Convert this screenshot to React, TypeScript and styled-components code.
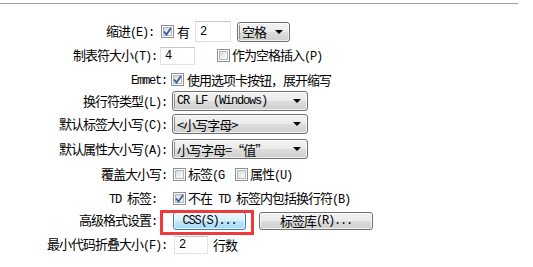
import React from "react";
import styled, { createGlobalStyle, css } from "styled-components";

const Global = createGlobalStyle`
  html, body { margin: 0; padding: 0; background: #fff; }
  body {
    font-family: "Noto Sans CJK SC", "Liberation Sans", sans-serif;
    font-size: 13px;
    letter-spacing: -1px;
    color: #000;
  }
`;

const Page = styled.div`
  width: 533px;
  height: 267px;
  overflow: hidden;
  background: #fff;
`;

const TopRule = styled.div`
  margin-top: 3px;
  width: 518px;
  height: 1px;
  background: #a0a0a0;
`;

const Form = styled.div`
  display: flex;
  flex-direction: column;
  padding-top: 16px;
`;

const Row = styled.div<{ $h: number }>`
  display: flex;
  align-items: center;
  height: ${(p) => p.$h}px;
`;

const Label = styled.div<{ $w: number }>`
  flex: none;
  width: ${(p) => p.$w}px;
  text-align: right;
  white-space: nowrap;
  line-height: 1;
`;

const Controls = styled.div<{ $ml: number }>`
  display: flex;
  align-items: center;
  margin-left: ${(p) => p.$ml}px;
`;

const M = styled.span`
  font-family: "Liberation Mono", "DejaVu Sans Mono", monospace;
  font-size: 12px;
  letter-spacing: -1.2px;
`;

const Text = styled.span<{ $ml?: number }>`
  margin-left: ${(p) => p.$ml ?? 0}px;
  white-space: nowrap;
  line-height: 1;
`;

const BoxWrap = styled.span<{ $ml?: number }>`
  flex: none;
  display: inline-flex;
  width: 13px;
  height: 13px;
  margin-left: ${(p) => p.$ml ?? 0}px;
  box-sizing: border-box;
  border: 1px solid #8e8f8f;
  background: #fff;
  padding: 1px;
`;

const BoxInner = styled.span`
  flex: 1;
  display: flex;
  align-items: center;
  justify-content: center;
  border: 1px solid #b3b7bd;
  background: linear-gradient(135deg, #d6d9de 0%, #eef0f2 60%, #f8f8f8 100%);
`;

const Check: React.FC<{ checked?: boolean; ml?: number }> = ({ checked, ml }) => (
  <BoxWrap $ml={ml}>
    <BoxInner>
      {checked && (
        <svg width="9" height="9" viewBox="0 0 9 9" style={{ margin: -1 }}>
          <path d="M1 4.5 L3.5 7.5 L8 1" fill="none" stroke="#3d5a98" strokeWidth="1.8" />
        </svg>
      )}
    </BoxInner>
  </BoxWrap>
);

const Input = styled.div<{ $w: number; $h: number; $ml?: number }>`
  flex: none;
  box-sizing: border-box;
  width: ${(p) => p.$w}px;
  height: ${(p) => p.$h}px;
  margin-left: ${(p) => p.$ml ?? 0}px;
  border: 1px solid #e2e3ea;
  border-top-color: #c5c7cc;
  background: #fff;
  display: flex;
  align-items: center;
  padding-left: 4px;
  font-family: "Liberation Mono", "DejaVu Sans Mono", monospace;
  font-size: 12px;
  letter-spacing: 0;
`;

const win7Grey = css`
  border: 1px solid #707070;
  border-radius: 3px;
  background: linear-gradient(#f2f2f2 0%, #ebebeb 50%, #dddddd 50%, #cfcfcf 100%);
  box-shadow: inset 0 0 0 1px rgba(255, 255, 255, 0.7);
`;

const SelectBox = styled.div<{ $w: number; $ml?: number }>`
  ${win7Grey}
  flex: none;
  box-sizing: border-box;
  width: ${(p) => p.$w}px;
  height: 20px;
  margin-left: ${(p) => p.$ml ?? 0}px;
  display: flex;
  align-items: stretch;
  padding: 2px 6px 2px 1px;
`;

const SelectText = styled.span`
  flex: 1;
  display: flex;
  align-items: center;
  white-space: nowrap;
  border-left: 1px solid #8c8c8c;
  padding-left: 2px;
`;

const Arrow = styled.span`
  flex: none;
  align-self: center;
  width: 0;
  height: 0;
  border-left: 4px solid transparent;
  border-right: 4px solid transparent;
  border-top: 4px solid #000;
  margin-left: 6px;
`;

const Select: React.FC<{ w: number; ml?: number; children: React.ReactNode }> = ({
  w,
  ml,
  children,
}) => (
  <SelectBox $w={w} $ml={ml}>
    <SelectText>{children}</SelectText>
    <Arrow />
  </SelectBox>
);

const Button = styled.div<{ $w: number; $ml?: number; $hot?: boolean }>`
  ${win7Grey}
  position: relative;
  flex: none;
  box-sizing: border-box;
  width: ${(p) => p.$w}px;
  height: 18px;
  margin-left: ${(p) => p.$ml ?? 0}px;
  display: flex;
  align-items: center;
  justify-content: center;
  white-space: nowrap;
  line-height: 1;
  ${(p) =>
    p.$hot &&
    css`
      border-color: #3c7fb1;
      background: linear-gradient(#eaf6fd 0%, #d9f0fc 50%, #bee6fd 50%, #a7d9f5 100%);
    `}
`;

const Highlight = styled.span`
  position: absolute;
  left: -14px;
  top: -3px;
  right: -9px;
  bottom: -6px;
  border: 3px solid #ee3a3a;
  pointer-events: none;
`;

export default function App() {
  return (
    <Page>
      <Global />
      <TopRule />
      <Form>
        <Row $h={23}>
          <Label $w={154}>
            缩进<M>(E):</M>
          </Label>
          <Controls $ml={7}>
            <Check checked />
            <Text $ml={3}>有</Text>
            <Input $w={36} $h={21} $ml={6}>2</Input>
            <Select w={53} ml={6}>
              空格
            </Select>
          </Controls>
        </Row>
        <Row $h={25}>
          <Label $w={157}>
            制表符大小<M>(T):</M>
          </Label>
          <Controls $ml={3}>
            <Input $w={35} $h={18}>4</Input>
            <Check ml={22} />
            <Text $ml={2}>
              作为空格插入<M>(P)</M>
            </Text>
          </Controls>
        </Row>
        <Row $h={22}>
          <Label $w={167}>
            <M>Emmet:</M>
          </Label>
          <Controls $ml={4}>
            <Check checked />
            <Text $ml={3}>使用选项卡按钮，展开缩写</Text>
          </Controls>
        </Row>
        <Row $h={22}>
          <Label $w={167}>
            换行符类型<M>(L):</M>
          </Label>
          <Controls $ml={5}>
            <Select w={136}>
              <M>CR LF (Windows)</M>
            </Select>
          </Controls>
        </Row>
        <Row $h={24}>
          <Label $w={167}>
            默认标签大小写<M>(C):</M>
          </Label>
          <Controls $ml={5}>
            <Select w={136}>&lt;小写字母&gt;</Select>
          </Controls>
        </Row>
        <Row $h={26}>
          <Label $w={167}>
            默认属性大小写<M>(A):</M>
          </Label>
          <Controls $ml={5}>
            <Select w={136}>小写字母=“值”</Select>
          </Controls>
        </Row>
        <Row $h={25}>
          <Label $w={167}>
            覆盖大小写<M>:</M>
          </Label>
          <Controls $ml={6}>
            <Check />
            <Text $ml={2}>
              标签<M>(G</M>
            </Text>
            <Check ml={11} />
            <Text $ml={2}>
              属性<M>(U)</M>
            </Text>
          </Controls>
        </Row>
        <Row $h={22}>
          <Label $w={157}>
            <M>TD </M>标签<M>:</M>
          </Label>
          <Controls $ml={16}>
            <Check checked />
            <Text $ml={2}>
              不在<M> TD </M>标签内包括换行符<M>(B)</M>
            </Text>
          </Controls>
        </Row>
        <Row $h={23}>
          <Label $w={157}>
            高级格式设置<M>:</M>
          </Label>
          <Controls $ml={16}>
            <Button $w={73} $hot>
              <M>CSS(S)...</M>
              <Highlight />
            </Button>
            <Button $w={114} $ml={13}>
              标签库<M>(R)...</M>
            </Button>
          </Controls>
        </Row>
        <Row $h={25}>
          <Label $w={167}>
            最小代码折叠大小<M>(F):</M>
          </Label>
          <Controls $ml={7}>
            <Input $w={34} $h={18}>2</Input>
            <Text $ml={5}>行数</Text>
          </Controls>
        </Row>
      </Form>
    </Page>
  );
}
